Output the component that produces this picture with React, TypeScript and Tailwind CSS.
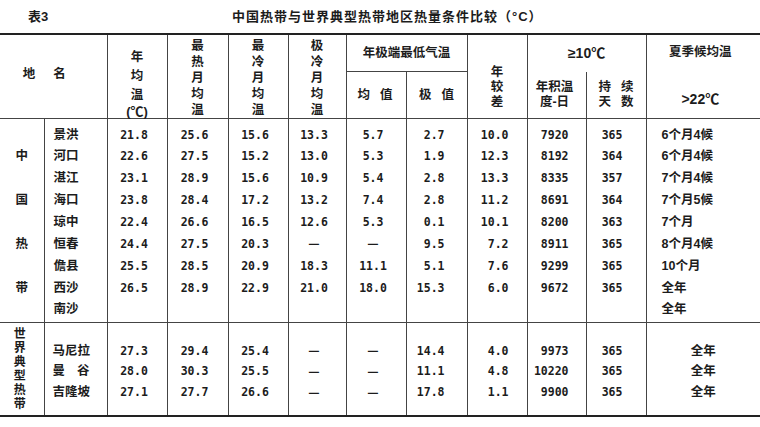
import * as React from "react";

type Row = {
  region?: string;
  name: string;
  avg: string;
  hot: string;
  cold: string;
  coldest: string;
  minAvg: string;
  minAbs: string;
  range: string;
  accum: string;
  days: string;
  summer: string;
};

const china: Row[] = [
  { name: "景洪", avg: "21.8", hot: "25.6", cold: "15.6", coldest: "13.3", minAvg: "5.7", minAbs: "2.7", range: "10.0", accum: "7920", days: "365", summer: "6个月4候" },
  { region: "中", name: "河口", avg: "22.6", hot: "27.5", cold: "15.2", coldest: "13.0", minAvg: "5.3", minAbs: "1.9", range: "12.3", accum: "8192", days: "364", summer: "6个月4候" },
  { name: "湛江", avg: "23.1", hot: "28.9", cold: "15.6", coldest: "10.9", minAvg: "5.4", minAbs: "2.8", range: "13.3", accum: "8335", days: "357", summer: "7个月4候" },
  { region: "国", name: "海口", avg: "23.8", hot: "28.4", cold: "17.2", coldest: "13.2", minAvg: "7.4", minAbs: "2.8", range: "11.2", accum: "8691", days: "364", summer: "7个月5候" },
  { name: "琼中", avg: "22.4", hot: "26.6", cold: "16.5", coldest: "12.6", minAvg: "5.3", minAbs: "0.1", range: "10.1", accum: "8200", days: "363", summer: "7个月" },
  { region: "热", name: "恒春", avg: "24.4", hot: "27.5", cold: "20.3", coldest: "—", minAvg: "—", minAbs: "9.5", range: "7.2", accum: "8911", days: "365", summer: "8个月4候" },
  { name: "儋县", avg: "25.5", hot: "28.5", cold: "20.9", coldest: "18.3", minAvg: "11.1", minAbs: "5.1", range: "7.6", accum: "9299", days: "365", summer: "10个月" },
  { region: "带", name: "西沙", avg: "26.5", hot: "28.9", cold: "22.9", coldest: "21.0", minAvg: "18.0", minAbs: "15.3", range: "6.0", accum: "9672", days: "365", summer: "全年" },
  { name: "南沙", avg: "", hot: "", cold: "", coldest: "", minAvg: "", minAbs: "", range: "", accum: "", days: "", summer: "全年" },
];

const world: Row[] = [
  { name: "马尼拉", avg: "27.3", hot: "29.4", cold: "25.4", coldest: "—", minAvg: "—", minAbs: "14.4", range: "4.0", accum: "9973", days: "365", summer: "全年" },
  { name: "曼谷", avg: "28.0", hot: "30.3", cold: "25.5", coldest: "—", minAvg: "—", minAbs: "11.1", range: "4.8", accum: "10220", days: "365", summer: "全年" },
  { name: "吉隆坡", avg: "27.1", hot: "27.7", cold: "26.6", coldest: "—", minAvg: "—", minAbs: "17.8", range: "1.1", accum: "9900", days: "365", summer: "全年" },
];

// Latin face first keeps the line boxes tight; the CJK face supplies the hanzi
const cjk = { fontFamily: '"Liberation Sans", "Noto Sans CJK SC", sans-serif' };
const dash = { fontFamily: '"Noto Sans CJK SC", sans-serif' };
const mono = { fontFamily: '"DejaVu Sans Mono", "Liberation Mono", monospace' };

const vline = "border-l border-[#444]";

function Stack({ chars, leading = "leading-[16px]" }: { chars: string[]; leading?: string }) {
  return (
    <div className={`flex flex-col items-center ${leading}`}>
      {chars.map((c, i) => (
        <span key={i}>{c}</span>
      ))}
    </div>
  );
}

function Num({ v }: { v: string }) {
  if (v === "—") {
    return (
      <span className="font-bold text-[12.5px]" style={dash}>
        —
      </span>
    );
  }
  return <span style={mono}>{v}</span>;
}

function DataCells({ r }: { r: Row }) {
  const num = `${vline} text-[11.5px] font-bold`;
  return (
    <>
      <td className={`${num} text-center pr-[6px]`}><Num v={r.avg} /></td>
      <td className={`${num} text-center pr-[6px]`}><Num v={r.hot} /></td>
      <td className={`${num} text-center pr-[6px]`}><Num v={r.cold} /></td>
      <td className={`${num} text-center pr-[6px]`}><Num v={r.coldest} /></td>
      <td className={`${num} text-center pr-[6px]`}><Num v={r.minAvg} /></td>
      <td className={`${num} text-right pr-[22px]`}><Num v={r.minAbs} /></td>
      <td className={`${num} text-right pr-[18px]`}><Num v={r.range} /></td>
      <td className={`${num} text-right pr-[17px]`}><Num v={r.accum} /></td>
      <td className={`${num} text-center pr-[8px]`}><Num v={r.days} /></td>
    </>
  );
}

export default function App() {
  return (
    <div className="w-[760px] h-[427px] bg-white text-[#1c1c1c] overflow-hidden" style={cjk}>
      <div className="h-[33px] flex items-center font-bold text-[13px]">
        <span className="w-[232px] pl-[28px]">表3</span>
        <span className="tracking-[1px]">中国热带与世界典型热带地区热量条件比较（°C）</span>
      </div>
      <table className="w-[760px] table-fixed border-collapse text-[12.5px] font-bold">
        <colgroup>
          <col className="w-[44px]" />
          <col className="w-[63px]" />
          <col className="w-[60px]" />
          <col className="w-[61px]" />
          <col className="w-[60px]" />
          <col className="w-[58px]" />
          <col className="w-[60px]" />
          <col className="w-[61px]" />
          <col className="w-[60px]" />
          <col className="w-[59px]" />
          <col className="w-[60px]" />
          <col className="w-[114px]" />
        </colgroup>
        <thead>
          <tr className="h-[37px] border-t-2 border-[#222]">
            <td colSpan={2} rowSpan={2} className="text-center pb-[4px]">
              <span className="tracking-[18px]">地名</span>
            </td>
            <td rowSpan={2} className={`${vline} align-top pt-[13px]`}>
              <div className="flex flex-col items-center leading-[19px]">
                <span>年</span>
                <span>均</span>
                <span>温</span>
                <span className="text-[13px] leading-[13px]">(℃)</span>
              </div>
            </td>
            <td rowSpan={2} className={`${vline} align-top pt-[3px]`}>
              <Stack chars={["最", "热", "月", "均", "温"]} />
            </td>
            <td rowSpan={2} className={`${vline} align-top pt-[3px]`}>
              <Stack chars={["最", "冷", "月", "均", "温"]} />
            </td>
            <td rowSpan={2} className={`${vline} align-top pt-[3px]`}>
              <Stack chars={["极", "冷", "月", "均", "温"]} />
            </td>
            <td colSpan={2} className={`${vline} border-b border-[#444] text-center`}>
              年极端最低气温
            </td>
            <td rowSpan={2} className={`${vline} align-top pt-[30px]`}>
              <Stack chars={["年", "较", "差"]} leading="leading-[15px]" />
            </td>
            <td colSpan={2} className={`${vline} text-center text-[14px]`}>
              ≥10℃
            </td>
            <td rowSpan={2} className={`${vline} align-top pt-[8px]`}>
              <div className="flex flex-col items-center gap-[27px] pr-[6px]">
                <span>夏季候均温</span>
                <span className="text-[14px]">&gt;22℃</span>
              </div>
            </td>
          </tr>
          <tr className="h-[46px] border-b border-[#444]">
            <td className={`${vline}`}>
              <div className="flex justify-center gap-[10px] pr-[2px]">
                <span>均</span>
                <span>值</span>
              </div>
            </td>
            <td className={`${vline}`}>
              <div className="flex justify-center gap-[10px]">
                <span>极</span>
                <span>值</span>
              </div>
            </td>
            <td className={`${vline} text-center leading-[15px] pr-[4px]`}>
              年积温
              <br />
              度-日
            </td>
            <td className={`${vline} leading-[15px]`}>
              <div className="grid grid-cols-2 gap-x-[10px] w-fit mx-auto">
                <span>持</span>
                <span>续</span>
                <span>天</span>
                <span>数</span>
              </div>
            </td>
          </tr>
        </thead>
        <tbody className="leading-[20px]">
          {china.map((r, i) => {
            const last = i === china.length - 1;
            const h = i === 0 ? "h-[26px] [&>td]:align-bottom" : last ? "h-[24px] [&>td]:align-top border-b border-[#444]" : "h-[22px]";
            return (
              <tr key={r.name} className={h}>
                <td className="text-center">{r.region ?? ""}</td>
                <td className={`${vline} pl-[9px]`}>{r.name}</td>
                <DataCells r={r} />
                <td className={`${vline} pl-[15px]`}>{r.summer}</td>
              </tr>
            );
          })}
          {world.map((r, i) => {
            const last = i === world.length - 1;
            const h = i === 0 ? "h-[38px] [&>td]:align-bottom" : last ? "h-[34px] [&>td]:align-top border-b-2 border-[#222]" : "h-[21px]";
            return (
              <tr key={r.name} className={h}>
                {i === 0 && (
                  <td rowSpan={3} className="!align-middle pr-[4px] text-[12px]">
                    <Stack chars={["世", "界", "典", "型", "热", "带"]} leading="leading-[14px]" />
                  </td>
                )}
                <td className={`${vline} pl-[8px]`}>
                  {r.name === "曼谷" ? (
                    <div className="flex gap-[12px]">
                      <span>曼</span>
                      <span>谷</span>
                    </div>
                  ) : (
                    r.name
                  )}
                </td>
                <DataCells r={r} />
                <td className={`${vline} text-center`}>{r.summer}</td>
              </tr>
            );
          })}
        </tbody>
      </table>
    </div>
  );
}
